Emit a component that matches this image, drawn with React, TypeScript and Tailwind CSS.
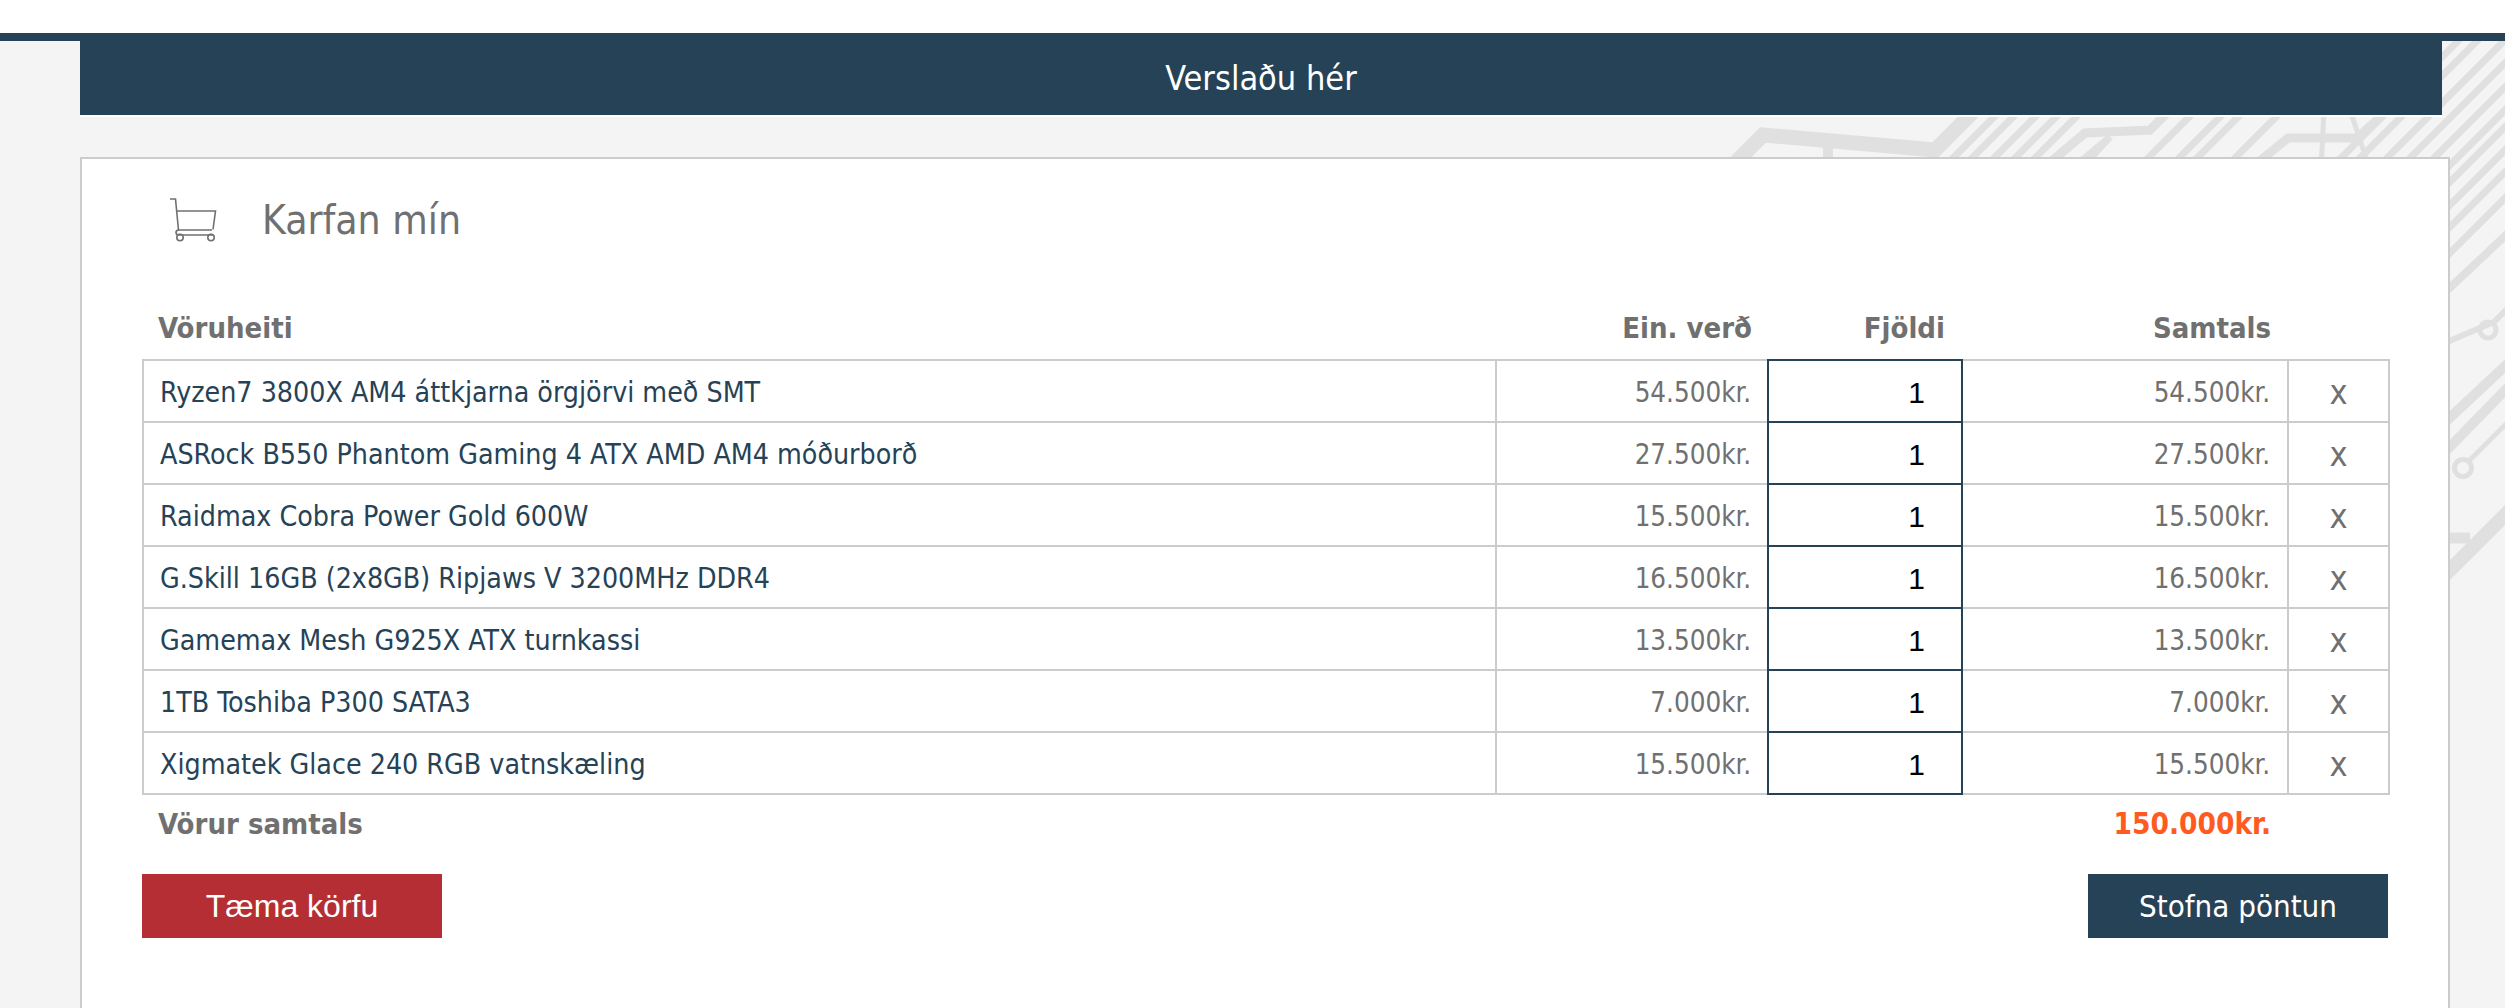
const ITEMS = [
  { name: 'Ryzen7 3800X AM4 áttkjarna örgjörvi með SMT', price: '54.500kr.' },
  { name: 'ASRock B550 Phantom Gaming 4 ATX AMD AM4 móðurborð', price: '27.500kr.' },
  { name: 'Raidmax Cobra Power Gold 600W', price: '15.500kr.' },
  { name: 'G.Skill 16GB (2x8GB) Ripjaws V 3200MHz DDR4', price: '16.500kr.' },
  { name: 'Gamemax Mesh G925X ATX turnkassi', price: '13.500kr.' },
  { name: '1TB Toshiba P300 SATA3', price: '7.000kr.' },
  { name: 'Xigmatek Glace 240 RGB vatnskæling', price: '15.500kr.' },
];

/* diagonal stripes of the circuit backdrop, as x + y */
const STRIPES = [2111, 2130, 2152, 2173, 2193, 2306, 2337, 2355, 2393, 2499, 2518, 2545, 2568, 2592, 2615, 2632, 2655, 2677, 2703];

function CircuitBackdrop() {
  return (
    <svg className="absolute top-0 left-0" width="2505" height="1008" fill="none" stroke="#e0e0e0" strokeWidth="7">
      {STRIPES.map((c) => (
        <line key={c} x1={c - 16} y1={16} x2={c - 300} y2={300} />
      ))}
      <path d="M1725 173L1763 135L1935 150L1985 100" strokeWidth="15" />
      <path d="M1828 140V170" strokeWidth="10" />
      <path d="M2040 171L2085 133L2150 130L2180 100" strokeWidth="9" />
      <path d="M2079 163L2110 137L2075 175" strokeWidth="7" />
      <path d="M2250 169L2288 138H2357L2410 90" strokeWidth="9" />
      <path d="M2324 110L2321 170" strokeWidth="5" />
      <path d="M2350 110L2370 170" strokeWidth="5" />
      <path d="M2440 297L2520 222" strokeWidth="8" />
      <path d="M2440 345L2494 322L2520 296" strokeWidth="6" />
      <circle cx="2488" cy="330" r="8" strokeWidth="5" />
      <path d="M2440 427L2520 352" strokeWidth="10" />
      <path d="M2440 457L2520 375" strokeWidth="10" />
      <path d="M2469 461L2520 410" strokeWidth="5" />
      <circle cx="2463" cy="468" r="8.5" strokeWidth="5" />
      <path d="M2440 580L2520 500" strokeWidth="14" />
      <path d="M2440 538H2470" strokeWidth="11" />
    </svg>
  );
}

function CartIcon() {
  return (
    <svg width="48" height="44" viewBox="0 0 48 44" fill="none" stroke="#707070" strokeWidth="1.6">
      <path d="M1 1H6.5L9.5 32H43" />
      <path d="M7.5 13H46.5L44 31.5" />
      <path d="M10 32C6 32 6 37 10 37H44" />
      <circle cx="11" cy="39.5" r="3.2" />
      <circle cx="42" cy="39.5" r="3.2" />
    </svg>
  );
}

export default function App() {
  return (
    <div className="relative min-h-[1008px] overflow-hidden bg-[#f4f4f4] font-['DejaVu_Sans',sans-serif] text-[#707070] [font-stretch:condensed]">
      <CircuitBackdrop />
      <div className="relative">
        <div className="h-[33px] bg-white" />
        <div className="h-2 bg-[#264256]" />
        <div className="ml-20 mr-[63px] flex h-[76px] items-center justify-center border-b-2 border-white bg-[#264256] text-[34px] text-white">
          Verslaðu hér
        </div>
        <div className="mt-10 ml-20 mr-[55px] h-[851px] border-2 border-b-0 border-[#cccccc] bg-white pt-[37px] pl-[60px]">
          <div className="flex h-[48px] items-center">
            <div className="ml-[27px] w-[93px]">
              <CartIcon />
            </div>
            <h1 className="text-[40.5px] leading-none font-normal">Karfan mín</h1>
          </div>
          <table className="mt-[44px] w-[2246px] table-fixed border-collapse text-[27.5px]">
            <colgroup>
              <col className="w-[1353px]" />
              <col className="w-[272px]" />
              <col className="w-[194px]" />
              <col className="w-[326px]" />
              <col className="w-[101px]" />
            </colgroup>
            <thead>
              <tr className="h-[72px] text-[29px] font-bold">
                <th className="pt-[10px] pl-[15px] text-left">Vöruheiti</th>
                <th className="pt-[10px] pr-4 text-right">Ein. verð</th>
                <th className="pt-[10px] pr-[17px] text-right">Fjöldi</th>
                <th className="pt-[10px] pr-[17px] text-right">Samtals</th>
                <th />
              </tr>
            </thead>
            <tbody>
              {ITEMS.map((item) => (
                <tr key={item.name} className="h-[62px]">
                  <td className="border-2 border-[#cccccc] pt-1 pl-4 text-[28.3px] text-[#264256]">{item.name}</td>
                  <td className="border-2 border-[#cccccc] pt-1 pr-4 text-right">{item.price}</td>
                  <td className="border-2 border-[#cccccc] p-0">
                    <input
                      readOnly
                      value="1"
                      className="relative -m-[2px] block h-[64px] w-[calc(100%+4px)] border-2 border-[#264256] bg-white pt-1 pr-9 text-right font-['Liberation_Sans',sans-serif] text-[30px] text-black"
                    />
                  </td>
                  <td className="border-2 border-[#cccccc] pt-1 pr-[17px] text-right">{item.price}</td>
                  <td className="border-2 border-[#cccccc] pt-[3px] text-center text-[34px]">x</td>
                </tr>
              ))}
            </tbody>
            <tfoot>
              <tr className="h-[60px] text-[29px] font-bold">
                <td className="pl-[15px]">Vörur samtals</td>
                <td />
                <td />
                <td className="pr-[17px] text-right text-[29.5px] text-[#ff5a1f]">150.000kr.</td>
                <td />
              </tr>
            </tfoot>
          </table>
          <div className="mt-5 flex w-[2246px] justify-between text-[31px] text-white">
            <button className="h-16 w-[300px] bg-[#b52e34] font-['Liberation_Sans',sans-serif] text-[32px]">Tæma körfu</button>
            <button className="h-16 w-[300px] bg-[#264256]">Stofna pöntun</button>
          </div>
        </div>
      </div>
    </div>
  );
}
